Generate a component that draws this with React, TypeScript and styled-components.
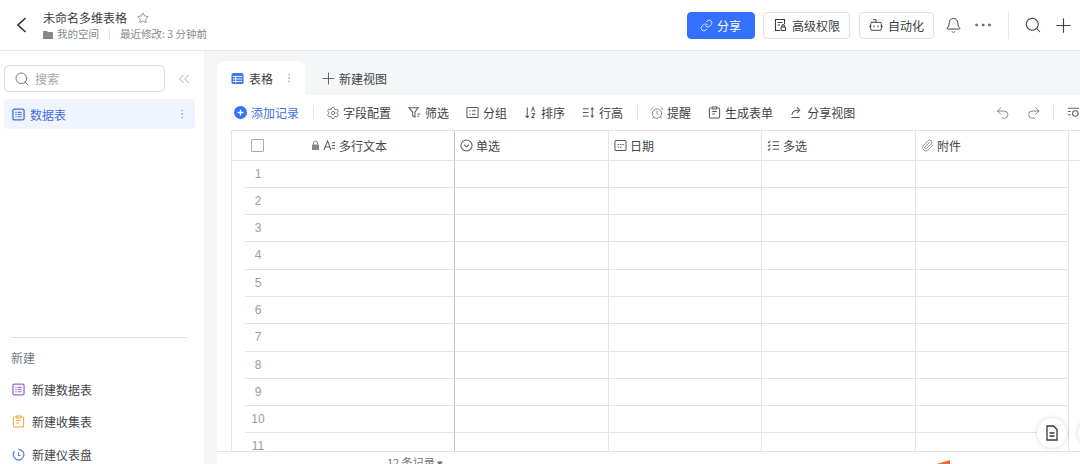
import React from "react";
import styled, { createGlobalStyle } from "styled-components";
import {
    AlarmClock,
    Bell,
    Bot,
    ChevronsLeft,
    Ellipsis,
    EllipsisVertical,
    Link,
    Paperclip,
    Plus,
    Redo2,
    Search,
    Settings,
    Star,
    Undo2,
} from "lucide-react";

const GlobalStyle = createGlobalStyle`
    html, body {
        margin: 0;
        padding: 0;
        width: 1080px;
        height: 464px;
        overflow: hidden;
        background: #ffffff;
    }
    * {
        box-sizing: border-box;
    }
`;

const Page = styled.div`
    width: 1080px;
    height: 464px;
    overflow: hidden;
    display: flex;
    flex-direction: column;
    font-family: "Noto Sans CJK SC", "Noto Sans", sans-serif;
    font-size: 12px;
    color: #3a3d42;
`;

const TopBar = styled.header`
    flex: none;
    height: 51px;
    display: flex;
    align-items: center;
    border-bottom: 1px solid #e6e7e9;
    background: #ffffff;
`;

const BackButton = styled.div`
    width: 43px;
    height: 30px;
    padding-left: 16px;
    display: flex;
    align-items: center;
    color: #33363b;
`;

const TitleBlock = styled.div`
    display: flex;
    flex-direction: column;
    gap: 1px;
`;

const TitleLine = styled.div`
    height: 17px;
    display: flex;
    align-items: center;
    gap: 10px;
    line-height: 17px;
    color: #3a3d42;
    svg {
        color: #555a60;
    }
`;

const MetaLine = styled.div`
    height: 14px;
    display: flex;
    align-items: center;
    font-size: 10.5px;
    line-height: 14px;
    color: #85898f;
`;

const Folder = styled.svg`
    width: 10px;
    height: 9px;
    margin-right: 4px;
    fill: #85898f;
`;

const MetaDivider = styled.span`
    width: 1px;
    height: 11px;
    margin: 0 10px;
    background: #e3e4e6;
`;

const TopActions = styled.div`
    margin-left: auto;
    display: flex;
    align-items: center;
`;

const BarButton = styled.div<{ $primary?: boolean; $width: number; $gap?: number }>`
    width: ${(p) => p.$width}px;
    height: 27px;
    margin-right: 8.5px;
    display: flex;
    align-items: center;
    justify-content: center;
    gap: ${(p) => p.$gap ?? 4}px;
    border-radius: 4px;
    border: 1px solid ${(p) => (p.$primary ? "#3370ff" : "#dfe0e2")};
    background: ${(p) => (p.$primary ? "#3370ff" : "#ffffff")};
    color: ${(p) => (p.$primary ? "#ffffff" : "#3a3d42")};
`;

const PlainIcon = styled.div<{ $width: number }>`
    width: ${(p) => p.$width}px;
    height: 27px;
    display: flex;
    align-items: center;
    justify-content: center;
    color: #3f4247;
`;

const TopDivider = styled.span`
    width: 1px;
    height: 27px;
    margin: 0 9px 0 6px;
    background: #e6e7e9;
`;

const Body = styled.div`
    flex: 1;
    min-height: 0;
    display: flex;
`;

const Sidebar = styled.aside`
    flex: none;
    width: 204px;
    padding: 14px 9px 0 4px;
    background: #ffffff;
`;

const SearchRow = styled.div`
    height: 27px;
    display: flex;
    align-items: center;
`;

const SearchBox = styled.div`
    width: 161px;
    height: 27px;
    padding-left: 9px;
    display: flex;
    align-items: center;
    gap: 5px;
    border: 1px solid #d9dadd;
    border-radius: 5px;
    color: #a3a6ab;
    svg {
        color: #55585d;
    }
`;

const Collapse = styled.div`
    margin-left: 9.5px;
    display: flex;
    color: #8f9297;
`;

const SheetItem = styled.div`
    height: 30px;
    margin-top: 7px;
    padding: 0 7px 0 8px;
    display: flex;
    align-items: center;
    gap: 5px;
    border-radius: 4px;
    background: #eff4fe;
    color: #3f6fe0;
    > svg:last-child {
        margin-left: auto;
        color: #9a9da2;
    }
`;

const SideDivider = styled.div`
    height: 1px;
    margin: 208px 7px 0 7px;
    background: #e3e4e6;
`;

const NewLabel = styled.div`
    height: 17px;
    margin: 11px 0 7px 7px;
    line-height: 17px;
    color: #767a80;
`;

const NewItem = styled.div`
    height: 32.5px;
    padding-left: 8px;
    display: flex;
    align-items: center;
    gap: 7px;
    color: #43464b;
`;

const Content = styled.main`
    flex: 1;
    min-width: 0;
    padding: 10px 0 0 13px;
    display: flex;
    flex-direction: column;
    background: #f5f6f8;
    position: relative;
`;

const TabStrip = styled.div`
    flex: none;
    height: 34px;
    display: flex;
    align-items: center;
`;

const ActiveTab = styled.div`
    width: 88px;
    height: 34px;
    padding-left: 14px;
    display: flex;
    align-items: center;
    gap: 5px;
    border-radius: 8px 8px 0 0;
    background: #ffffff;
    color: #3a3d42;
    svg:last-child {
        margin-left: 5px;
        color: #a0a3a8;
    }
`;

const NewViewTab = styled.div`
    margin-left: 14px;
    display: flex;
    align-items: center;
    gap: 1px;
    color: #3f4247;
`;

const Panel = styled.section`
    flex: 1;
    min-height: 0;
    display: flex;
    flex-direction: column;
    background: #ffffff;
`;

const Toolbar = styled.div`
    flex: none;
    height: 35px;
    padding-left: 17px;
    display: flex;
    align-items: center;
    gap: 17px;
`;

const ToolItem = styled.div<{ $accent?: boolean }>`
    height: 16px;
    display: flex;
    align-items: center;
    gap: 4px;
    white-space: nowrap;
    color: ${(p) => (p.$accent ? "#3f6fe0" : "#3f4247")};
    svg {
        flex: none;
        color: ${(p) => (p.$accent ? "#3370ff" : "#55585d")};
    }
`;

const WideIconItem = styled(ToolItem)`
    gap: 3px;
    margin-left: -1px;
`;

const ToolDivider = styled.span`
    width: 1px;
    height: 15px;
    margin: 0 -3.5px;
    background: #e3e4e6;
`;

const ToolbarEnd = styled.div`
    margin-left: auto;
    display: flex;
    align-items: center;
    gap: 15px;
    width: 85px;
    flex: none;
    color: #5c5f64;
    svg:last-child {
        flex: none;
        margin-left: 2px;
    }
`;

const Grid = styled.div`
    flex: none;
    height: 321px;
    margin-left: 14px;
    overflow: hidden;
    border-left: 1px solid #e3e4e6;
    border-top: 1px solid #e3e4e6;
`;

const HeaderRow = styled.div`
    height: 29.5px;
    display: grid;
    grid-template-columns: 223px 154px 153px 154px 153px;
    border-bottom: 1px solid #e3e4e6;
`;

const HeadCell = styled.div<{ $strong?: boolean }>`
    min-width: 0;
    padding-left: 5px;
    display: flex;
    align-items: center;
    gap: 3px;
    border-right: 1px solid ${(p) => (p.$strong ? "#c4c6c9" : "#e3e4e6")};
    color: #43464b;
    svg {
        flex: none;
        color: #55585d;
    }
`;

const FirstHeadCell = styled(HeadCell)`
    padding-left: 19px;
`;

const Check = styled.span`
    width: 13px;
    height: 13px;
    margin-right: 44px;
    border: 1px solid #a8abaf;
    border-radius: 1px;
`;

const HeadLabel = styled.span`
    margin-left: 0;
`;

const DataRow = styled.div`
    height: 27.3px;
    display: grid;
    grid-template-columns: 13px 210px 154px 153px 154px 153px;
    grid-template-rows: 27.3px;
`;

const Gutter = styled.div``;

const DataCell = styled.div<{ $strong?: boolean }>`
    min-height: 0;
    border-bottom: 1px solid #e3e4e6;
    border-right: 1px solid ${(p) => (p.$strong ? "#c4c6c9" : "#e3e4e6")};
`;

const RowNumber = styled.span`
    display: block;
    width: 26px;
    font-family: "Liberation Sans", Arial, sans-serif;
    font-size: 12px;
    line-height: 26px;
    text-align: center;
    color: #9a9da2;
`;

const Footer = styled.div`
    flex: none;
    height: 40px;
    display: flex;
    border-top: 1px solid #e3e4e6;
    background: #ffffff;
`;

const RecordCount = styled.div`
    margin-left: 170px;
    padding-top: 3px;
    font-size: 11px;
    line-height: 14px;
    color: #6f7278;
`;

const Flame = styled.svg`
    width: 18px;
    height: 5px;
    margin: 8px 0 0 490px;
    fill: #ee6a3a;
`;

const FloatButton = styled.div<{ $right: number }>`
    position: absolute;
    right: ${(p) => p.$right}px;
    bottom: 16px;
    width: 30px;
    height: 30px;
    display: flex;
    align-items: center;
    justify-content: center;
    border-radius: 50%;
    background: #ffffff;
    box-shadow: 0 0 4px rgba(0, 0, 0, 0.16);
    color: #33363b;
`;

const Glyph: React.FC<{ size?: number; color?: string; children: React.ReactNode }> = ({
    size = 13,
    color = "currentColor",
    children,
}) => (
    <svg width={size} height={size} viewBox="0 0 14 14" fill="none" stroke={color} strokeWidth="1.1">
        {children}
    </svg>
);

const TableIcon: React.FC<{ color: string }> = ({ color }) => (
    <Glyph color={color}>
        <rect x="1" y="1.2" width="12" height="11.6" rx="1.5" strokeWidth="1.4" />
        <path d="M3.6 4.7H5M6.2 4.7h4.2M3.6 7H5M6.2 7h4.2M3.6 9.3H5M6.2 9.3h4.2" />
    </Glyph>
);

const SolidTableIcon: React.FC = () => (
    <svg width="13" height="13" viewBox="0 0 14 14">
        <rect x="0.5" y="1" width="13" height="12" rx="2" fill="#3f78ee" />
        <path d="M2 4.8h10M2 7.5h10M2 10.2h10M5 4.8v7" stroke="#fff" strokeWidth="1" />
    </svg>
);

const FormIcon: React.FC<{ color?: string }> = ({ color }) => (
    <Glyph color={color}>
        <path d="M3.5 2H3a1.5 1.5 0 0 0-1.5 1.5v8A1.5 1.5 0 0 0 3 13h8a1.5 1.5 0 0 0 1.5-1.5v-8A1.5 1.5 0 0 0 11 2h-.5M4.5 1h5v2.3h-5zM4.500 6h5M4.500 8.500h3" />
    </Glyph>
);

const DocIcon: React.FC = () => (
    <svg width="14" height="16" viewBox="0 0 14 16" fill="none" stroke="#33363b" strokeWidth="1.3">
        <path d="M2 1h6.5L12 4.5V15H2zM4.500 8h5M4.500 11h5" />
    </svg>
);

const columns = [1, 2, 3, 4];
const rowNumbers = [1, 2, 3, 4, 5, 6, 7, 8, 9, 10, 11, 12];

const App: React.FC = () => {
    return (
        <Page>
            <GlobalStyle />
            <TopBar>
                <BackButton>
                    <svg width="11" height="16" viewBox="0 0 11 16" fill="none" stroke="currentColor" strokeWidth="1.7">
                        <path d="M9.5 1 2 8l7.5 7" />
                    </svg>
                </BackButton>
                <TitleBlock>
                    <TitleLine>
                        未命名多维表格
                        <Star size={12} strokeWidth={1.3} />
                    </TitleLine>
                    <MetaLine>
                        <Folder viewBox="0 0 10 9">
                            <path d="M0 1h4l1 1h5v7H0z" />
                        </Folder>
                        我的空间
                        <MetaDivider />
                        最近修改: 3 分钟前
                    </MetaLine>
                </TitleBlock>
                <TopActions>
                    <BarButton $primary $width={68}>
                        <Link size={13} strokeWidth={1.5} />
                        分享
                    </BarButton>
                    <BarButton $width={87} $gap={5}>
                        <Glyph size={14}>
                            <path d="M7 12.5H2.5v-11h9V6M4.5 4.5h5M4.5 7H7" />
                            <rect x="8" y="9" width="4.5" height="3.5" rx="0.6" />
                            <path d="M9 9V7.8a1.2 1.2 0 0 1 2.4 0V9" />
                        </Glyph>
                        高级权限
                    </BarButton>
                    <BarButton $width={75}>
                        <Bot size={16} strokeWidth={1.4} />
                        自动化
                    </BarButton>
                    <PlainIcon $width={22}>
                        <Bell size={17} strokeWidth={1.4} />
                    </PlainIcon>
                    <PlainIcon $width={38}>
                        <Ellipsis size={22} strokeWidth={1} />
                    </PlainIcon>
                    <TopDivider />
                    <PlainIcon $width={29}>
                        <Search size={18} strokeWidth={1.4} />
                    </PlainIcon>
                    <PlainIcon $width={33}>
                        <Plus size={23} strokeWidth={1.2} />
                    </PlainIcon>
                </TopActions>
            </TopBar>
            <Body>
                <Sidebar>
                    <SearchRow>
                        <SearchBox>
                            <Search size={16} strokeWidth={1.2} />
                            搜索
                        </SearchBox>
                        <Collapse>
                            <ChevronsLeft size={18} strokeWidth={1} />
                        </Collapse>
                    </SearchRow>
                    <SheetItem>
                        <TableIcon color="#3f6fe0" />
                        数据表
                        <EllipsisVertical size={12} strokeWidth={1.5} />
                    </SheetItem>
                    <SideDivider />
                    <NewLabel>新建</NewLabel>
                    <NewItem>
                        <TableIcon color="#9a6ae0" />
                        新建数据表
                    </NewItem>
                    <NewItem>
                        <FormIcon color="#f0a23c" />
                        新建收集表
                    </NewItem>
                    <NewItem>
                        <Glyph color="#5f7fe0">
                            <path d="M7 1.5A5.7 5.7 0 1 1 2.7 3.5" strokeWidth="1.4" />
                            <path d="M7 4.5V8h2.2" />
                        </Glyph>
                        新建仪表盘
                    </NewItem>
                </Sidebar>
                <Content>
                    <TabStrip>
                        <ActiveTab>
                            <SolidTableIcon />
                            表格
                            <EllipsisVertical size={12} strokeWidth={1.4} />
                        </ActiveTab>
                        <NewViewTab>
                            <Plus size={19} strokeWidth={1} />
                            新建视图
                        </NewViewTab>
                    </TabStrip>
                    <Panel>
                        <Toolbar>
                            <ToolItem $accent>
                                <svg width="13" height="13" viewBox="0 0 14 14">
                                    <circle cx="7" cy="7" r="7" fill="currentColor" />
                                    <path d="M7 3.8v6.4M3.8 7h6.4" stroke="#fff" strokeWidth="1.5" />
                                </svg>
                                添加记录
                            </ToolItem>
                            <ToolDivider />
                            <WideIconItem>
                                <Settings size={14} strokeWidth={1.3} />
                                字段配置
                            </WideIconItem>
                            <ToolItem>
                                <Glyph>
                                    <path d="M1 2h10L7.5 6.5V12L5 10.5v-4zM10 8.5h3M10 11h2" />
                                </Glyph>
                                筛选
                            </ToolItem>
                            <ToolItem>
                                <Glyph>
                                    <rect x="1" y="1.5" width="12" height="11" rx="1" />
                                    <path d="M3.5 5H5M6.5 5h4M3.5 9H5M6.5 9h4" />
                                </Glyph>
                                分组
                            </ToolItem>
                            <ToolItem>
                                <Glyph>
                                    <path d="M3.5 1.5v11M1.5 10.5l2 2 2-2M8 6l1.8-4.5L11.5 6M8.5 8h3L8.5 12.5h3" />
                                </Glyph>
                                排序
                            </ToolItem>
                            <ToolItem>
                                <Glyph>
                                    <path d="M1 3h6M1 7h6M1 11h6M11 2v10M9.5 3.8 11 2l1.5 1.8M9.5 10.2 11 12l1.5-1.8" />
                                </Glyph>
                                行高
                            </ToolItem>
                            <ToolDivider />
                            <WideIconItem>
                                <AlarmClock size={14} strokeWidth={1.2} />
                                提醒
                            </WideIconItem>
                            <ToolItem>
                                <FormIcon />
                                生成表单
                            </ToolItem>
                            <ToolItem>
                                <Glyph>
                                    <path d="M1.5 12.5h9M2 9.5C2.5 6 5 4.5 9 4.5M7.5 1.5l3 3-3 3" />
                                </Glyph>
                                分享视图
                            </ToolItem>
                            <ToolbarEnd>
                                <Undo2 size={16} strokeWidth={1.1} />
                                <Redo2 size={16} strokeWidth={1.1} />
                                <ToolDivider />
                                <Glyph>
                                    <path d="M1 2.5h12M1 6h3M1 9.5h3" />
                                    <circle cx="9" cy="8" r="3" />
                                </Glyph>
                            </ToolbarEnd>
                        </Toolbar>
                        <Grid>
                            <HeaderRow>
                                <FirstHeadCell $strong>
                                    <Check />
                                    <svg width="9" height="10" viewBox="0 0 9 10">
                                        <path d="M1 4.5h7V10H1z" fill="#85898f" />
                                        <path d="M2.5 4.5V3a2 2 0 0 1 4 0v1.5" fill="none" stroke="#85898f" />
                                    </svg>
                                    <Glyph>
                                        <path d="M1 12 5 2l3.5 10M2.5 8.5H7M9.5 4H13M9.5 7H13M9.5 10H13" />
                                    </Glyph>
                                    <HeadLabel>多行文本</HeadLabel>
                                </FirstHeadCell>
                                <HeadCell>
                                    <Glyph>
                                        <circle cx="7" cy="7" r="6" />
                                        <path d="m4.5 6 2.5 2.5L9.5 6" />
                                    </Glyph>
                                    <HeadLabel>单选</HeadLabel>
                                </HeadCell>
                                <HeadCell>
                                    <Glyph>
                                        <rect x="1" y="1.5" width="12" height="11" rx="1.5" />
                                        <path d="M4 6h1.5M6.5 6H8M9 6h1.5M4 9h1.5M6.5 9H8" />
                                    </Glyph>
                                    <HeadLabel>日期</HeadLabel>
                                </HeadCell>
                                <HeadCell>
                                    <Glyph>
                                        <path d="M6 3h7M6 7h7M6 11h7M1 3l1 1 1.5-2M1 7l1 1 1.5-2M1 11l1 1 1.5-2" />
                                    </Glyph>
                                    <HeadLabel>多选</HeadLabel>
                                </HeadCell>
                                <HeadCell>
                                    <Paperclip size={13} strokeWidth={1.2} />
                                    <HeadLabel>附件</HeadLabel>
                                </HeadCell>
                            </HeaderRow>
                            {rowNumbers.map((n) => (
                                <DataRow key={n}>
                                    <Gutter />
                                    <DataCell $strong>
                                        <RowNumber>{n}</RowNumber>
                                    </DataCell>
                                    {columns.map((c) => (
                                        <DataCell key={c} />
                                    ))}
                                </DataRow>
                            ))}
                        </Grid>
                        <Footer>
                            <RecordCount>12 条记录 ▾</RecordCount>
                            <Flame viewBox="0 0 18 5">
                                <path d="M0 5 17 0v5z" />
                            </Flame>
                        </Footer>
                    </Panel>
                    <FloatButton $right={13}>
                        <DocIcon />
                    </FloatButton>
                    <FloatButton $right={-28} />
                </Content>
            </Body>
        </Page>
    );
};

export default App;
